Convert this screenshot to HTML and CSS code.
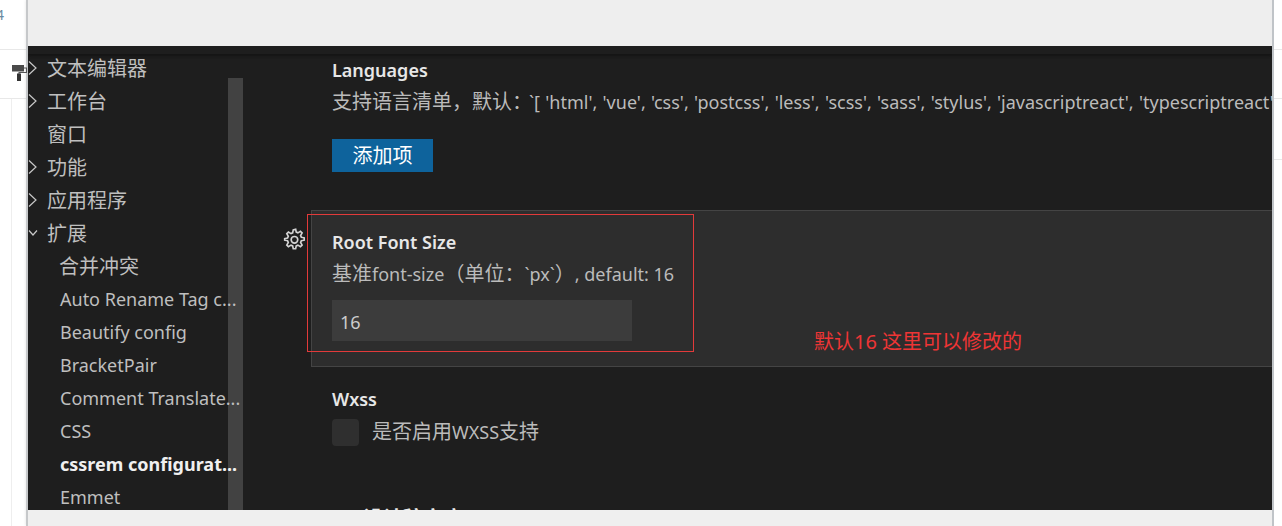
FILE: index.html
```html
<!DOCTYPE html>
<html lang="zh">
<head>
<meta charset="utf-8">
<title>cssrem settings</title>
<link rel="stylesheet" href="styles.css">
</head>
<body>
<div class="page">
  <aside class="gutter gutter-left">
    <div class="gutter-num"><span>4</span></div>
    <div class="gutter-row"></div>
    <div class="gutter-rest"></div>
  </aside>
  <main class="sheet">
    <div class="sheet-top"></div>
    <div class="editor">
      <div class="titleband"></div>
      <div class="panes">
        <nav class="tree">
          <div class="tree-scroll"></div>
          <div class="tree-list">
            <div class="row cjk"><svg class="chev" viewBox="0 0 10 16"><path d="M1 1.5 8 8l-7 6.5"/></svg>文本编辑器</div>
            <div class="row cjk"><svg class="chev" viewBox="0 0 10 16"><path d="M1 1.5 8 8l-7 6.5"/></svg>工作台</div>
            <div class="row cjk"><span class="chev"></span>窗口</div>
            <div class="row cjk"><svg class="chev" viewBox="0 0 10 16"><path d="M1 1.5 8 8l-7 6.5"/></svg>功能</div>
            <div class="row cjk"><svg class="chev" viewBox="0 0 10 16"><path d="M1 1.5 8 8l-7 6.5"/></svg>应用程序</div>
            <div class="row cjk"><svg class="chev" viewBox="0 0 10 16"><path d="M1 5.5 5 10l4-4.5"/></svg>扩展</div>
            <div class="row sub cjk">合并冲突</div>
            <div class="row sub">Auto Rename Tag c...</div>
            <div class="row sub">Beautify config</div>
            <div class="row sub">BracketPair</div>
            <div class="row sub">Comment Translate...</div>
            <div class="row sub">CSS</div>
            <div class="row sub active">cssrem configurat...</div>
            <div class="row sub">Emmet</div>
          </div>
        </nav>
        <section class="content">
          <div class="setting">
            <h3 class="s-title">Languages</h3>
            <p class="s-desc lang-list"><span class="cjk lang-lead">支持语言清单，默认：</span>`[ 'html', 'vue', 'css', 'postcss', 'less', 'scss', 'sass', 'stylus', 'javascriptreact', 'typescriptreact', 'javascript', 'typescript' ]`</p>
            <button class="add-btn cjk">添加项</button>
          </div>
          <div class="setting-focus">
            <svg class="gear" viewBox="0 0 16 16"><path d="M9.1 1.5 9.5 3.4l1.1.5 1.7-1 1.1 1.1-1 1.7.5 1.1 1.9.4v1.6l-1.9.4-.5 1.1 1 1.7-1.1 1.1-1.7-1-1.1.5-.4 1.9H7.5l-.4-1.9-1.1-.5-1.7 1-1.1-1.1 1-1.7-.5-1.1-1.9-.4V7.7l1.9-.4.5-1.1-1-1.7 1.1-1.1 1.7 1 1.1-.5.4-1.9Z"/><circle cx="8.3" cy="8.5" r="2.2"/></svg>
            <h3 class="s-title">Root Font Size</h3>
            <p class="s-desc"><span class="cjk">基准</span>font-size<span class="cjk">（单位：</span>`px`<span class="cjk">）</span>, default: 16</p>
            <div class="num-input">16</div>
          </div>
          <div class="setting setting-wxss">
            <h3 class="s-title">Wxss</h3>
            <label class="check"><span class="box"></span><span><span class="cjk">是否启用</span>WXSS<span class="cjk">支持</span></span></label>
          </div>
          <div class="setting setting-next">
            <h3 class="s-title">Vw <span class="cjk">设计稿宽度</span></h3>
          </div>
        </section>
      </div>
    </div>
    <div class="sheet-bottom"></div>
  </main>
  <aside class="gutter gutter-right">
    <div class="gutter-num"></div>
    <div class="gutter-row"></div>
    <div class="gutter-row2"></div>
  </aside>
</div>
<svg class="roller" viewBox="0 0 15 16"><path class="roller-head" d="M0 0h12v6.500H0z"/><path class="roller-arm" d="M12 3h2.500v4.500H7V9"/><path class="roller-handle" d="M5 8.500h4V16H5z"/></svg>
<div class="mark-box"></div>
<div class="mark-text">默认16 这里可以修改的</div>
</body>
</html>
```
FILE: styles.css
```css
html, body { margin: 0; padding: 0; height: 100%; overflow: hidden; background: #fff; }
body { font-family: "Noto Sans", "Noto Sans CJK SC", sans-serif; font-size: 18px; }
.cjk { font-size: 20px; }
.page { display: flex; height: 526px; }
.gutter { background: #fff; flex: none; }
.gutter-left { width: 26px; color: #6a8aa0; font-size: 14px; }
.gutter-right { width: 8px; }
.gutter-num { height: 49px; border-bottom: 1px solid #e8e8e8; overflow: hidden; }
.gutter-num span { display: block; margin-left: -4px; padding-top: 5px; }
.gutter-row { height: 48px; border-bottom: 1px solid #e8e8e8; }
.gutter-row2 { height: 60px; border-bottom: 1px solid #e8e8e8; }
.gutter-rest { height: 428px; border-right: 1px solid #eee; width: 11px; }
.sheet { flex: 1; min-width: 0; display: flex; flex-direction: column; border-left: 2px solid #c6c8ca; border-right: 2px solid #c0c4c8; box-shadow: 0 0 3px rgba(0,0,0,.12); }
.sheet-top { height: 46px; background: #eeeeee; flex: none; }
.sheet-bottom { flex: 1; background: #efefef; }
.editor { height: 464px; background: #1e1e1e; display: flex; flex-direction: column; overflow: hidden; flex: none; }
.titleband { height: 8px; background: #1e1e1e; box-shadow: 0 2px 3px #141414; flex: none; position: relative; }
.panes { flex: 1; display: flex; min-height: 0; }
.tree { width: 215px; flex: none; position: relative; overflow: hidden; }
.tree-list { position: relative; margin-top: -3px; }
.row { height: 33px; color: #bfbfbf; white-space: nowrap; display: flex; align-items: center; overflow: hidden; }
.row .chev { width: 10px; height: 16px; flex: none; margin-right: 10px; }
.chev path { fill: none; stroke: #c8c8c8; stroke-width: 1.2; }
.row.cjk { text-indent: -1px; }
.row.sub { padding-left: 32px; }
.row.active { color: #f0f0f0; font-weight: 700; }
.tree-scroll { position: absolute; right: 0; top: 24px; bottom: 0; width: 15px; background: #424242; }
.content { flex: 1; min-width: 0; padding-top: 3px; overflow: hidden; }
.setting { padding-left: 89px; }
.s-title { margin: 0; font-size: 18px; line-height: 26px; font-weight: 600; color: #e7e7e7; }
.s-desc { margin: 6px 0 0; line-height: 26px; color: #bbbbbb; white-space: nowrap; }
.lang-list { word-spacing: .6px; }
.lang-lead { margin-right: -3px; }
.add-btn { display: block; margin: 24px 0 0; width: 101px; height: 33px; border: 0; padding: 0; background: #0e639c; color: #fff; font-family: inherit; line-height: 33px; }
.setting-focus { position: relative; margin: 38px 0 0 68px; padding: 18px 0 26px 20px; height: 157px; box-sizing: border-box; background: #2d2d2d; border: 1px solid #444; border-right: 0; }
.gear { position: absolute; left: -30px; top: 16px; width: 24px; height: 24px; fill: none; stroke: #d4d4d4; stroke-width: 1.1; }
.num-input { margin-top: 13px; width: 300px; height: 41px; line-height: 45px; padding-left: 8px; box-sizing: border-box; background: #3c3c3c; color: #cccccc; }
.setting-wxss { margin-top: 19px; }
.check { display: flex; align-items: center; gap: 13px; color: #bbbbbb; margin-top: 6px; line-height: 27px; }
.box { width: 27px; height: 27px; border-radius: 4px; background: #2f2f2f; flex: none; }
.setting-next { margin-top: 60px; }
.roller { position: absolute; left: 12px; top: 65px; width: 15px; height: 16px; }
.roller-head { fill: #4a4a4a; }
.roller-arm { fill: none; stroke: #555; stroke-width: 1.1; }
.roller-handle { fill: #333; }
.mark-box { position: absolute; left: 307px; top: 214px; width: 385px; height: 136px; border: 1px solid #e23a3a; }
.mark-text { position: absolute; left: 814px; top: 329px; color: #ee3535; font-size: 20px; line-height: 26px; white-space: nowrap; }
```
